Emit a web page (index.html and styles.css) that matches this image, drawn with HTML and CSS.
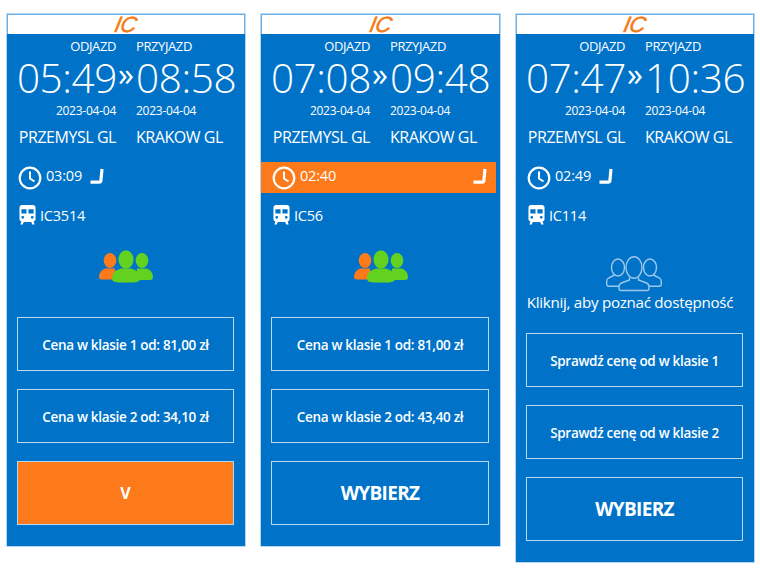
FILE: index.html
```html
<!DOCTYPE html>
<html lang="pl">
<head>
<meta charset="utf-8">
<title>Połączenia</title>
<link rel="stylesheet" href="styles.css">
</head>
<body>
<svg class="defs" width="0" height="0" aria-hidden="true">
  <symbol id="clock" viewBox="0 0 24 24"><circle cx="12" cy="12" r="10.300" fill="none" stroke="currentColor" stroke-width="2.200"/><path d="M12 5.500V12.500L16.500 15.500" fill="none" stroke="currentColor" stroke-width="2"/></symbol>
  <symbol id="seat" viewBox="0 0 16 18"><path d="M12.800 1L11.600 13.500Q11.400 15 9.800 15H0.500" fill="none" stroke="currentColor" stroke-width="3.400" stroke-linejoin="round"/></symbol>
  <symbol id="train" viewBox="0 0 18 21"><path fill="currentColor" fill-rule="evenodd" d="M3.500 0H14.500Q17.500 0 17.500 3V15Q17.500 17 15.500 17L16.500 20.500H14L13 18H5L4 20.500H1.500L2.500 17Q0.500 17 0.500 15V3Q0.500 0 3.500 0ZM2.500 4.500V9H8V4.500ZM10 4.500V9H15.500V4.500ZM4 11.500A1.500 1.500 0 1 0 4 14.500A1.500 1.500 0 1 0 4 11.500ZM14 11.500A1.500 1.500 0 1 0 14 14.500A1.500 1.500 0 1 0 14 11.500Z"/></symbol>
  <symbol id="people-full" viewBox="0 0 54 33">
    <ellipse cx="11" cy="10.500" rx="6.300" ry="7.500" fill="#fd7a1a"/>
    <path d="M6 18.500H16L16 29.500H3Q0 29.500 0 27Q0 21 6 18.500Z" fill="#fd7a1a"/>
    <ellipse cx="43" cy="10.500" rx="6.300" ry="7.500" fill="#63d11f"/>
    <path d="M38 18.500H48Q54 21 54 27Q54 30 51 30H38Z" fill="#63d11f"/>
    <ellipse cx="27" cy="9.500" rx="7.500" ry="9.300" fill="#63d11f"/>
    <path d="M22 18.500H32L37 20.500Q41 23 41 29Q41 32 35 32.500H19Q13 32 13 29Q13 23 17 20.500Z" fill="#63d11f"/>
  </symbol>
  <symbol id="people-line" viewBox="0 0 56 36">
    <g fill="none" stroke="#9cc8ec" stroke-width="1.400">
      <ellipse cx="12" cy="11.500" rx="6.500" ry="8.500"/>
      <ellipse cx="44" cy="11.500" rx="6.500" ry="8.500"/>
      <path d="M8.500 19L2.500 22Q0.700 23 0.700 25.500V28Q0.700 30.300 3 30.300H13"/>
      <path d="M47.500 19L53.500 22Q55.300 23 55.300 25.500V28Q55.300 30.300 53 30.300H43"/>
      <ellipse cx="28" cy="11.500" rx="8" ry="10.800" fill="#0073c9"/>
      <path d="M23.500 21.500V24L15.500 27Q13 28 13 30.500V32.500Q13 34.500 15 34.500H41Q43 34.500 43 32.500V30.500Q43 28 40.500 27L32.500 24V21.500"/>
    </g>
  </symbol>
</svg>

<main class="board">
  <section class="card">
    <header class="brand"><span class="logo">IC</span></header>
    <div class="times">
      <span class="label left">ODJAZD</span><span></span><span class="label">PRZYJAZD</span>
      <span class="time left">05:49</span><span class="arrow">»</span><span class="time">08:58</span>
      <span class="date left">2023-04-04</span><span></span><span class="date">2023-04-04</span>
      <span class="station left">PRZEMYSL GL</span><span></span><span class="station">KRAKOW GL</span>
    </div>
    <div class="duration">
      <svg class="clock"><use href="#clock"/></svg><span class="dur-text">03:09</span>
      <svg class="seat"><use href="#seat"/></svg>
    </div>
    <div class="train"><svg class="train-icon"><use href="#train"/></svg><span>IC3514</span></div>
    <div class="avail"><svg class="people"><use href="#people-full"/></svg></div>
    <div class="actions">
      <button class="btn">Cena w klasie 1 od: 81,00 zł</button>
      <button class="btn">Cena w klasie 2 od: 34,10 zł</button>
      <button class="btn select active">V</button>
    </div>
  </section>

  <section class="card">
    <header class="brand"><span class="logo">IC</span></header>
    <div class="times">
      <span class="label left">ODJAZD</span><span></span><span class="label">PRZYJAZD</span>
      <span class="time left">07:08</span><span class="arrow">»</span><span class="time">09:48</span>
      <span class="date left">2023-04-04</span><span></span><span class="date">2023-04-04</span>
      <span class="station left">PRZEMYSL GL</span><span></span><span class="station">KRAKOW GL</span>
    </div>
    <div class="duration highlighted">
      <svg class="clock"><use href="#clock"/></svg><span class="dur-text">02:40</span>
      <svg class="seat seat-end"><use href="#seat"/></svg>
    </div>
    <div class="train"><svg class="train-icon"><use href="#train"/></svg><span>IC56</span></div>
    <div class="avail"><svg class="people"><use href="#people-full"/></svg></div>
    <div class="actions">
      <button class="btn">Cena w klasie 1 od: 81,00 zł</button>
      <button class="btn">Cena w klasie 2 od: 43,40 zł</button>
      <button class="btn select">WYBIERZ</button>
    </div>
  </section>

  <section class="card">
    <header class="brand"><span class="logo">IC</span></header>
    <div class="times">
      <span class="label left">ODJAZD</span><span></span><span class="label">PRZYJAZD</span>
      <span class="time left">07:47</span><span class="arrow">»</span><span class="time">10:36</span>
      <span class="date left">2023-04-04</span><span></span><span class="date">2023-04-04</span>
      <span class="station left">PRZEMYSL GL</span><span></span><span class="station">KRAKOW GL</span>
    </div>
    <div class="duration">
      <svg class="clock"><use href="#clock"/></svg><span class="dur-text">02:49</span>
      <svg class="seat"><use href="#seat"/></svg>
    </div>
    <div class="train"><svg class="train-icon"><use href="#train"/></svg><span>IC114</span></div>
    <div class="avail unknown">
      <svg class="people-outline"><use href="#people-line"/></svg>
      <span class="hint">Kliknij, aby poznać dostępność</span>
    </div>
    <div class="actions">
      <button class="btn">Sprawdź cenę od w klasie 1</button>
      <button class="btn">Sprawdź cenę od w klasie 2</button>
      <button class="btn select">WYBIERZ</button>
    </div>
  </section>
</main>
</body>
</html>
```

FILE: styles.css
```css
* { box-sizing: border-box; }
html, body { margin: 0; padding: 0; background: #fff; }
body { width: 760px; height: 572px; overflow: hidden; font-family: "Open Sans", "Noto Sans", sans-serif; color: #fff; }
.defs { display: block; height: 0; }

.board { display: flex; align-items: flex-start; gap: 16px; padding: 14px 0 0 7px; }
.card { width: 238px; background: #0073c9; box-shadow: 0 0 0 0.5px #6fb0e6; padding-bottom: 21px; }
.card:nth-child(2) { width: 239px; }

.brand { height: 20px; background: #fff; border: 1px solid #6fb0e6; border-bottom: 0; display: flex; justify-content: center; align-items: center; }
.logo { font: italic 400 22px/20px "Liberation Sans", sans-serif; color: #f47a14; -webkit-text-stroke: 0.5px #f47a14; letter-spacing: -0.300px; transform: skewX(-12deg); }

.times { display: grid; grid-template-columns: 109px 20px 1fr; align-items: center; padding-top: 4px; }
.left { justify-self: end; }
.label { font-size: 13px; line-height: 16px; letter-spacing: -0.400px; font-weight: 500; white-space: nowrap; }
.time { font-size: 40.500px; line-height: 46px; font-weight: 300; letter-spacing: -0.400px; margin-top: 1px; white-space: nowrap; }
.time.left { margin-right: -1px; }
.arrow { font-size: 32px; line-height: 46px; text-align: center; margin-top: -7px; font-weight: 500; }
.date { font-size: 12px; line-height: 16px; letter-spacing: -0.250px; margin-top: 2px; font-weight: 500; }
.station { font-size: 16px; line-height: 20px; letter-spacing: -0.450px; margin-top: 8px; white-space: nowrap; font-weight: 500; }

.duration { height: 31px; margin-top: 15px; display: flex; align-items: center; padding-left: 11px; }
.clock { width: 24px; height: 24px; }
.dur-text { font-size: 14.500px; line-height: 20px; margin-left: 4px; margin-top: -3px; letter-spacing: -0.200px; }
.seat { width: 15px; height: 17px; margin-left: 8px; margin-top: -2px; }
.highlighted { background: #fd7a1a; margin-right: 4px; }
.seat-end { margin-left: auto; margin-right: 8px; }

.train { height: 20px; margin-top: 12px; display: flex; align-items: center; gap: 4px; padding-left: 12px; font-size: 14.500px; letter-spacing: -0.200px; }
.train-icon { width: 17px; height: 20px; }

.avail { height: 34px; margin-top: 25px; margin-bottom: 33px; display: flex; justify-content: center; }
.people { width: 54px; height: 33px; }
.unknown { height: 52px; margin-top: 33px; margin-bottom: 23px; flex-direction: column; align-items: center; }
.people-outline { width: 56px; height: 36px; flex: none; margin-right: 2px; }
.hint { font-size: 15.200px; line-height: 20px; letter-spacing: -0.300px; white-space: nowrap; margin-right: 10px; }

.actions { display: flex; flex-direction: column; gap: 18px; padding: 0 11px 0 10px; }
.btn { height: 54px; background: #0073c9; border: 1px solid #b6d8f3; color: #fff; font-family: "Open Sans", "Noto Sans", sans-serif; font-weight: 600; font-size: 13.500px; letter-spacing: -0.300px; padding: 2px 0 0; }
.select { height: 64px; font-size: 19px; font-weight: 700; letter-spacing: -0.700px; padding: 0; }
.active { background: #fd7a1a; font-size: 16px; letter-spacing: 0; }
```
